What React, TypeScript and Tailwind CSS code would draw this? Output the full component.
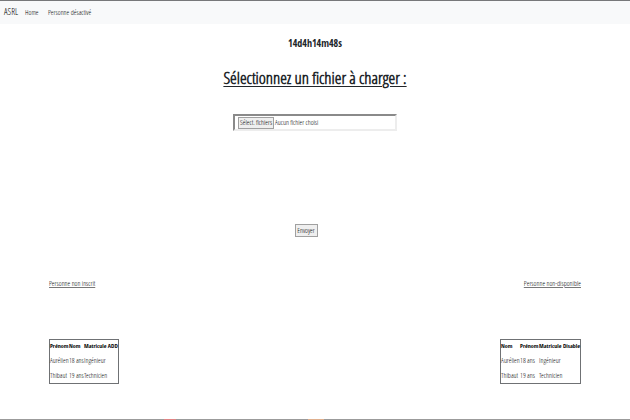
import React from "react";

type PeopleTableProps = {
  headers: string[];
  rows: string[][];
  columns: string[];
  label: string;
};

function PeopleTable({ headers, rows, columns, label }: PeopleTableProps) {
  return (
    <table
      aria-label={label}
      className="table-fixed border-separate border-spacing-0 border border-[#6f7174] text-left leading-[13px] whitespace-nowrap"
    >
      <colgroup>
        {columns.map((c, i) => (
          <col key={i} className={c} />
        ))}
      </colgroup>
      <thead>
        <tr className="font-['Open_Sans_Condensed','Open_Sans',sans-serif] text-[6px]">
          {headers.map((h) => (
            <th key={h} scope="col" className="h-[13px] p-0 font-bold">
              {h}
            </th>
          ))}
        </tr>
      </thead>
      <tbody>
        {rows.map((row) => (
          <tr key={row[0]}>
            {row.map((cell) => (
              <td key={cell} className="h-[15px] p-0">
                {cell}
              </td>
            ))}
          </tr>
        ))}
      </tbody>
    </table>
  );
}

const people = [
  ["Aurélien", "18 ans", "Ingénieur"],
  ["Thibaut", "19 ans", "Technicien"],
];

export default function App() {
  return (
    <div className="flex min-h-screen flex-col border-t border-[#77787a] bg-white font-['Open_Sans_Condensed_Light','Open_Sans',sans-serif] text-[7px] text-black">
      <nav className="flex h-[23px] items-baseline bg-[#f8f9fa] pt-1 pl-1 leading-[14px]">
        <a href="#" className="w-[21px] text-[9px]">
          ASRL
        </a>
        <a href="#" className="w-[23px]">
          Home
        </a>
        <a href="#">Personne désactivé</a>
      </nav>

      <main className="flex grow flex-col">
        <p className="mt-3 text-center font-['Open_Sans_Condensed','Open_Sans',sans-serif] text-[10px] leading-[14px] font-bold text-[#212529]">
          14d4h14m48s
        </p>
        <h1 className="mt-4 text-center text-[17px] leading-6 font-semibold text-[#212529] underline decoration-1 underline-offset-2">
          Sélectionnez un fichier à charger :
        </h1>

        <form className="flex flex-col items-center" onSubmit={(e) => e.preventDefault()}>
          <label className="mt-6 flex h-[17px] w-[164px] items-center border-2 border-t-[#8a8a8a] border-r-[#ededed] border-b-[#ededed] border-l-[#8a8a8a] pl-[3px] leading-none">
            <input type="file" multiple className="sr-only" />
            <span className="flex h-3 w-9 items-center justify-center border border-[#a0a0a0] bg-[#efefef] whitespace-nowrap">
              Sélect. fichiers
            </span>
            <span className="pl-px">Aucun fichier choisi</span>
          </label>
          <button
            type="submit"
            className="mt-[93px] mr-[18px] flex h-[13px] w-[23px] items-center justify-center border border-[#a0a0a0] bg-[#efefef] leading-none"
          >
            Envoyer
          </button>
        </form>

        <div className="mt-[42px] flex justify-between px-[49px]">
          <section className="flex flex-col items-start gap-[50px]">
            <h2 className="leading-[10px] underline decoration-[#777777]">Personne non inscrit</h2>
            <PeopleTable
              label="Personne non inscrit"
              headers={["Prénom", "Nom", "Matricule ADD"]}
              rows={people}
              columns={["w-[19px]", "w-[15px]", "w-[33px]"]}
            />
          </section>
          <section className="flex flex-col items-end gap-[50px]">
            <h2 className="leading-[10px] underline decoration-[#777777]">Personne non-disponible</h2>
            <PeopleTable
              label="Personne non-disponible"
              headers={["Nom", "Prénom", "Matricule Disable"]}
              rows={people}
              columns={["w-[19px]", "w-[19px]", "w-[39px]"]}
            />
          </section>
        </div>
      </main>

      <footer className="flex h-px bg-[#9b9b9b]">
        <div className="ml-[26%] w-3 bg-[#e08585]" />
        <div className="ml-[21%] w-4 bg-[#dfb08f]" />
      </footer>
    </div>
  );
}
